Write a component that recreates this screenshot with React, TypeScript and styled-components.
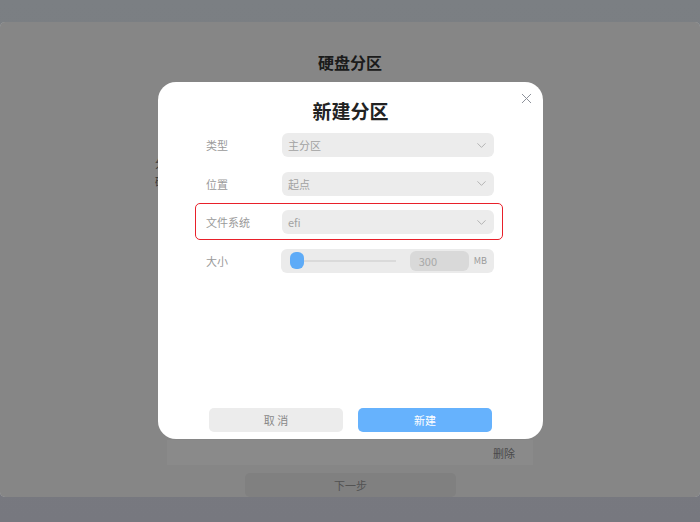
import styled, { createGlobalStyle } from "styled-components";
import { ChevronDown, X } from "lucide-react";

const GlobalStyle = createGlobalStyle`
  html, body {
    margin: 0;
    padding: 0;
  }
  body {
    width: 700px;
    height: 522px;
    overflow: hidden;
    background: linear-gradient(#7b7f83, #77787f);
    font-family: "Noto Sans CJK SC", "Noto Sans", sans-serif;
  }
`;

const Screen = styled.div`
  height: 522px;
  padding: 22px 0 25px;
  box-sizing: border-box;
`;

const Window = styled.div`
  position: relative;
  height: 475px;
  background: #f7f7f7;
  border-radius: 5px;
  display: flex;
  flex-direction: column;
  align-items: center;
  padding-top: 30px;
  box-sizing: border-box;
  overflow: hidden;
`;

const PageTitle = styled.h1`
  margin: 0;
  font-size: 16px;
  line-height: 20px;
  font-weight: 700;
  color: #333;
`;

const PageBody = styled.div`
  flex: 1;
  width: 390px;
  display: flex;
  flex-direction: column;
`;

const InfoText = styled.div`
  margin-top: 82px;
  font-size: 11px;
  line-height: 18px;
  color: #666;
`;

const Spacer = styled.div`
  flex: 1;
`;

const PartRow = styled.div`
  width: 366px;
  height: 25px;
  margin-left: 12px;
  background: #fff;
  display: flex;
  align-items: center;
  justify-content: flex-end;
  padding-right: 18px;
  box-sizing: border-box;
  font-size: 11px;
  color: #8a8a8a;
`;

const NextButton = styled.div`
  width: 211px;
  height: 24px;
  margin: 8px 0 0 90px;
  border-radius: 5px;
  background: #ececec;
  display: flex;
  align-items: center;
  justify-content: center;
  font-size: 11px;
  color: #999;
`;

const Overlay = styled.div`
  position: absolute;
  inset: 0;
  background: rgba(0, 0, 0, 0.46);
  display: flex;
  align-items: center;
  justify-content: center;
  padding: 2px 0 0 1px;
`;

const Dialog = styled.div`
  position: relative;
  width: 385px;
  height: 357px;
  background: #fff;
  border-radius: 18px;
  display: flex;
  flex-direction: column;
  box-sizing: border-box;
  padding-top: 17px;
`;

const CloseButton = styled.div`
  position: absolute;
  top: 8px;
  right: 8px;
  display: flex;
  color: #8c9099;
`;

const DialogTitle = styled.h2`
  margin: 0;
  text-align: center;
  font-size: 19px;
  line-height: 24px;
  font-weight: 700;
  color: #222;
`;

const Form = styled.div`
  margin-top: 10px;
  padding: 0 49px 0 48px;
  display: flex;
  flex-direction: column;
  gap: 14.6px;
`;

const Row = styled.div<{ $highlight?: boolean }>`
  position: relative;
  display: flex;
  align-items: center;
  height: 24px;

  &::before {
    content: "";
    display: ${(p) => (p.$highlight ? "block" : "none")};
    position: absolute;
    top: -7px;
    bottom: -6px;
    left: -11px;
    right: -9px;
    border: 1.6px solid #e8202a;
    border-radius: 5px;
  }
`;

const Label = styled.div`
  width: 76px;
  font-size: 11px;
  color: #9a9a9a;
`;

const Select = styled.div`
  flex: 1;
  height: 24px;
  border-radius: 6px;
  background: #ececec;
  display: flex;
  align-items: center;
  justify-content: space-between;
  padding: 0 5px 0 6px;
  box-sizing: border-box;
  font-size: 11px;
  color: #a2a2a2;

  svg {
    color: #aaa;
  }
`;

const SliderBox = styled.div`
  flex: 1;
  height: 24px;
  border-radius: 6px;
  background: #ebebeb;
  display: flex;
  align-items: center;
  padding: 0 7px 0 9px;
  box-sizing: border-box;
`;

const Thumb = styled.div`
  width: 14px;
  height: 17px;
  border-radius: 6px;
  background: #5eabf7;
`;

const Track = styled.div`
  width: 92px;
  height: 1.5px;
  background: #dadada;
`;

const SizeInput = styled.div`
  width: 59px;
  height: 20px;
  margin-left: 14px;
  border-radius: 6px;
  background: #d9d9d9;
  display: flex;
  align-items: center;
  padding-left: 9px;
  box-sizing: border-box;
  font-size: 11px;
  color: #a8a8a8;
`;

const Unit = styled.span`
  margin-left: 5px;
  font-size: 9px;
  color: #9a9a9a;
`;

const Footer = styled.div`
  margin-top: auto;
  padding-bottom: 7px;
  display: flex;
  justify-content: center;
  gap: 15px;
`;

const Button = styled.div<{ $primary?: boolean }>`
  width: 134px;
  height: 24px;
  border-radius: 5px;
  display: flex;
  align-items: center;
  justify-content: center;
  font-size: 11px;
  background: ${(p) => (p.$primary ? "#66b2fd" : "#ececec")};
  color: ${(p) => (p.$primary ? "#fff" : "#888")};
`;

const fields = [
  { label: "类型", value: "主分区" },
  { label: "位置", value: "起点" },
  { label: "文件系统", value: "efi", highlight: true },
];

export default function App() {
  return (
    <>
      <GlobalStyle />
      <Screen>
        <Window>
          <PageTitle>硬盘分区</PageTitle>
          <PageBody>
            <InfoText>
              <div>分区方案</div>
              <div>磁盘信息</div>
            </InfoText>
            <Spacer />
            <PartRow>删除</PartRow>
            <NextButton>下一步</NextButton>
          </PageBody>
          <Overlay>
            <Dialog>
              <CloseButton>
                <X size={17} strokeWidth={1.4} />
              </CloseButton>
              <DialogTitle>新建分区</DialogTitle>
              <Form>
                {fields.map((f) => (
                  <Row key={f.label} $highlight={f.highlight}>
                    <Label>{f.label}</Label>
                    <Select>
                      <span>{f.value}</span>
                      <ChevronDown size={15} strokeWidth={1.4} />
                    </Select>
                  </Row>
                ))}
                <Row>
                  <Label>大小</Label>
                  <SliderBox>
                    <Thumb />
                    <Track />
                    <SizeInput>300</SizeInput>
                    <Unit>MB</Unit>
                  </SliderBox>
                </Row>
              </Form>
              <Footer>
                <Button>取 消</Button>
                <Button $primary>新建</Button>
              </Footer>
            </Dialog>
          </Overlay>
        </Window>
      </Screen>
    </>
  );
}
